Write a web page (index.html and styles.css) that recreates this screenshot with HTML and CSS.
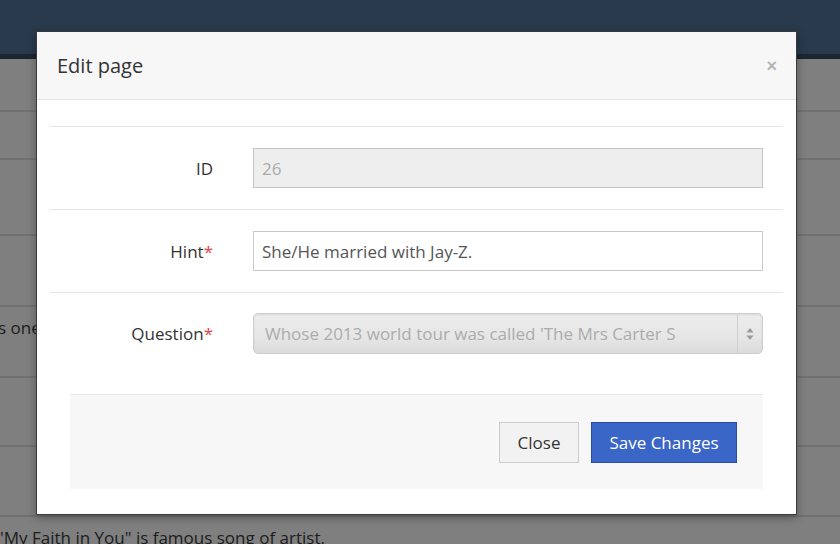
FILE: index.html
```html
<!DOCTYPE html>
<html>
<head>
<meta charset="utf-8">
<link rel="stylesheet" href="styles.css">
</head>
<body>
<div class="page">
  <div class="topbar"></div>
  <div class="rows">
    <div class="row r1"></div>
    <div class="row r2"></div>
    <div class="row r3"></div>
    <div class="row r4"></div>
    <div class="row r5"><span class="bgtext">s one</span></div>
    <div class="row r6"></div>
    <div class="row r7"></div>
    <div class="row r8"><span class="bgtext bottom">"My Faith in You" is famous song of artist.</span></div>
  </div>
</div>

<div class="modal">
  <div class="modal-header">
    <h4 class="modal-title">Edit page</h4>
    <span class="close">×</span>
  </div>
  <div class="modal-body">
    <div class="form-row">
      <label class="label">ID</label>
      <div class="input disabled">26</div>
    </div>
    <div class="form-row">
      <label class="label">Hint<span class="req">*</span></label>
      <div class="input">She/He married with Jay-Z.</div>
    </div>
    <div class="form-row last">
      <label class="label">Question<span class="req">*</span></label>
      <div class="select">
        <span class="select-text">Whose 2013 world tour was called 'The Mrs Carter S</span>
        <span class="select-arrows">
          <svg width="8" height="14" viewBox="0 0 8 14"><path d="M4 1 L7.5 5.5 H0.5 Z" fill="#9a9a9a"/><path d="M4 13 L7.5 8.5 H0.5 Z" fill="#9a9a9a"/></svg>
        </span>
      </div>
    </div>
    <div class="modal-footer">
      <button class="btn btn-default">Close</button>
      <button class="btn btn-primary">Save Changes</button>
    </div>
  </div>
</div>
</body>
</html>
```

FILE: styles.css
```css
html, body {
  margin: 0;
  padding: 0;
}
body {
  font-family: "Open Sans", "Noto Sans", sans-serif;
  background: #7f7f7f;
  width: 840px;
  height: 544px;
  overflow: hidden;
  position: relative;
}
.page {
  display: flex;
  flex-direction: column;
}
.topbar {
  height: 54px;
  background: #283a4c;
  border-bottom: 5px solid #1a2632;
}
.rows {
  display: flex;
  flex-direction: column;
}
.row {
  border-bottom: 2px solid #707070;
  display: flex;
  align-items: flex-start;
  position: relative;
  overflow: hidden;
}
.r1 { height: 51px; }
.r2 { height: 46px; }
.r3 { height: 74px; }
.r4 { height: 69px; }
.r5 { height: 69px; }
.r6 { height: 67px; }
.r7 { height: 68px; }
.r8 { height: 40px; border-bottom: none; }
.bgtext {
  font-size: 17px;
  color: #1c1c1c;
  white-space: nowrap;
}
.r5 .bgtext {
  margin-left: -2px;
  margin-top: 9px;
}
.bottom {
  margin-left: -3px;
  margin-top: 9px;
}

.modal {
  position: absolute;
  left: 36px;
  top: 31px;
  width: 759px;
  height: 482px;
  background: #fff;
  border: 1px solid #3a3a3a;
  box-shadow: 0 3px 9px rgba(0,0,0,0.3);
  display: flex;
  flex-direction: column;
}
.modal-header {
  height: 67px;
  background: #f7f7f7;
  border-bottom: 1px solid #e3e3e3;
  display: flex;
  align-items: center;
  justify-content: space-between;
  padding: 0 20px 0 20px;
}
.modal-title {
  margin: 0;
  font-size: 20px;
  font-weight: 400;
  color: #333;
  margin-top: -1px;
}
.close {
  font-size: 18px;
  color: #b5b5b5;
  font-weight: 700;
  margin-top: 2px;
  margin-right: -1px;
  font-family: "Liberation Sans", sans-serif;
}
.modal-body {
  padding: 26px 13px 0 13px;
  display: flex;
  flex-direction: column;
}
.form-row {
  border-top: 1px solid #e5e5e5;
  height: 82px;
  display: flex;
  align-items: center;
}
.form-row.last {
  height: 102px;
  align-items: flex-start;
  padding-top: 20px;
  box-sizing: border-box;
}
.label {
  width: 163px;
  text-align: right;
  font-size: 17px;
  color: #333;
  margin-right: 40px;
}
.form-row.last .label {
  margin-top: 9px;
}
.req { color: #e04343; }
.input {
  width: 510px;
  height: 40px;
  box-sizing: border-box;
  border: 1px solid #c8c8c8;
  padding: 0 8px;
  display: flex;
  align-items: center;
  font-size: 17px;
  color: #555;
  background: #fff;
}
.input.disabled {
  background: #eeeeee;
  color: #aaa;
  border-color: #c4c4c4;
}
.select {
  width: 510px;
  height: 41px;
  box-sizing: border-box;
  border: 1px solid #cdcdcd;
  border-radius: 5px;
  background: linear-gradient(#ececec, #e6e6e6 60%, #dcdcdc);
  box-shadow: inset 0 1px 2px rgba(0,0,0,0.08);
  display: flex;
  align-items: center;
  font-size: 17px;
  color: #acacac;
}
.select-text {
  flex: 1;
  padding-left: 11px;
  white-space: nowrap;
  overflow: hidden;
}
.select-arrows {
  width: 24px;
  height: 39px;
  border-left: 1px solid #cfcfcf;
  display: flex;
  align-items: center;
  justify-content: center;
}
.modal-footer {
  margin: 0 20px;
  height: 95px;
  background: #f7f7f7;
  border-top: 1px solid #e5e5e5;
  display: flex;
  align-items: center;
  justify-content: flex-end;
  padding-right: 26px;
  gap: 12px;
  box-sizing: border-box;
}
.btn {
  height: 41px;
  font-family: "Open Sans", "Noto Sans", sans-serif;
  font-size: 17px;
  padding: 0;
  cursor: pointer;
}
.btn-default {
  width: 80px;
  background: #f2f2f2;
  border: 1px solid #cccccc;
  color: #333;
}
.btn-primary {
  width: 146px;
  background: #3a66c8;
  border: 1px solid #2a4ea8;
  color: #fff;
}
```
